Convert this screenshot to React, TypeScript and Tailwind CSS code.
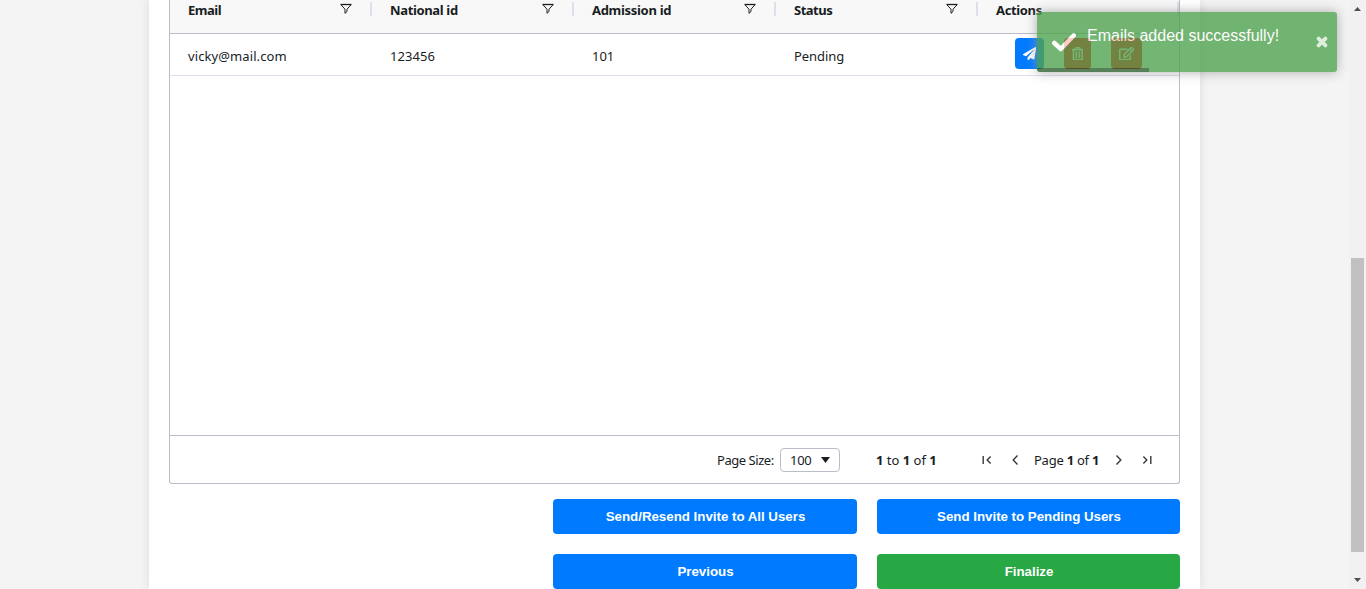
import type { ReactNode } from "react";
import { FaPaperPlane, FaRegEdit, FaRegTrashAlt } from "react-icons/fa";

const headers = [
  { label: "Email", spacing: "tracking-[-0.5px]" },
  { label: "National id", spacing: "tracking-[-0.35px]" },
  { label: "Admission id", spacing: "tracking-[-0.3px]" },
  { label: "Status", spacing: "tracking-[-0.5px]" },
];
const row = [
  { value: "vicky@mail.com", spacing: "tracking-[0.1px]" },
  { value: "123456", spacing: "tracking-[0.05px]" },
  { value: "101", spacing: "tracking-[0px]" },
  { value: "Pending", spacing: "tracking-[-0.05px]" },
];

function FilterIcon() {
  return (
    <svg className="mt-0.5 h-3 w-3 shrink-0" viewBox="0 0 12 12" fill="none" stroke="#181d1f" strokeWidth="1">
      <path d="M0.5 1.5H11.5" strokeWidth="1.3" />
      <path d="M1.2 2L5 6.2V10.3L7 8.5V6.2L10.8 2" />
    </svg>
  );
}

function Chevron({ flip, bar }: { flip?: boolean; bar?: boolean }) {
  return (
    <svg
      className={flip ? "h-3 w-3 shrink-0 -scale-x-100" : "h-3 w-3 shrink-0"}
      viewBox="0 0 12 12"
      fill="none"
      stroke="#34393b"
      strokeWidth="1.4"
    >
      {bar ? <path d="M2.2 2V10M9.6 2.6L6.2 6L9.6 9.4" /> : <path d="M8.5 1.5L4.2 6L8.5 10.5" />}
    </svg>
  );
}

function GridHeader() {
  return (
    <div className="flex h-[34px] shrink-0 border-b border-[#babcc9] bg-[#f8f8f8] pt-px text-[13px] font-bold">
      {headers.map((h) => (
        <div key={h.label} className="flex w-[202px] shrink-0 pl-[18px]">
          <span className={`w-[152px] shrink-0 leading-[18px] ${h.spacing}`}>{h.label}</span>
          <FilterIcon />
          <span className="ml-[18px] mt-px h-3.5 w-0.5 shrink-0 bg-[#dddfeb]" />
        </div>
      ))}
      <div className="flex flex-1 justify-between overflow-hidden pl-[18px]">
        <span className="leading-[18px] tracking-[-0.35px]">Actions</span>
        <span className="mt-px h-3.5 w-0.5 bg-[#dddfeb]" />
      </div>
    </div>
  );
}

function IconButton({ tone, children }: { tone: string; children: ReactNode }) {
  return (
    <button className={`flex h-[31px] shrink-0 items-center justify-center rounded text-[13.33px] text-white ${tone}`}>
      {children}
    </button>
  );
}

function GridRow() {
  return (
    <div className="flex h-[42px] shrink-0 items-start border-b border-[#dddfeb] text-[13px]">
      {row.map((c) => (
        <div key={c.value} className={`w-[202px] shrink-0 pl-[18px] pt-[13px] leading-[18px] ${c.spacing}`}>
          {c.value}
        </div>
      ))}
      <div className="flex flex-1 gap-5 pl-[37px] pt-1">
        <IconButton tone="w-[29px] bg-[#007bff]"><FaPaperPlane /></IconButton>
        <IconButton tone="w-[27px] bg-[#ff0000]"><FaRegTrashAlt className="w-[11.67px]" strokeWidth="16" stroke="currentColor" /></IconButton>
        <IconButton tone="w-[31px] bg-[#ff0000]"><FaRegEdit className="w-[15px]" strokeWidth="16" stroke="currentColor" /></IconButton>
      </div>
    </div>
  );
}

function Pager() {
  return (
    <div className="flex h-12 shrink-0 items-center border-t border-[#babcc9] pl-[547px] pt-px text-[13px]">
      <span className="w-[57px] whitespace-nowrap pt-px tracking-[-0.45px]">Page Size:</span>
      <div className="-mt-px ml-1.5 flex h-6 w-[60px] items-center justify-between rounded border border-[#babcc9] px-[9px]">
        <span className="pt-0.5 tracking-[-0.3px]">100</span>
        <svg className="h-1.5 w-[9px]" viewBox="0 0 9 6"><path d="M0 0H9L4.5 6Z" fill="#181d1f" /></svg>
      </div>
      <span className="ml-9 w-[60px] whitespace-nowrap pt-px"><b>1</b> to <b>1</b> of <b>1</b></span>
      <div className="ml-[45px] flex items-center">
        <Chevron bar />
        <span className="ml-4 flex"><Chevron /></span>
        <span className="ml-[13px] w-[66px] whitespace-nowrap pt-px tracking-[-0.25px]">Page <b>1</b> of <b>1</b></span>
        <span className="ml-[13px] flex"><Chevron flip /></span>
        <span className="ml-4 flex"><Chevron flip bar /></span>
      </div>
    </div>
  );
}

function WideButton({ tone, children }: { tone: string; children: ReactNode }) {
  return (
    <button className={`h-[35px] rounded pl-px font-['Liberation_Sans',sans-serif] text-[13.33px] font-bold tracking-[-0.02px] text-white ${tone}`}>
      {children}
    </button>
  );
}

function Toast() {
  return (
    <div className="absolute left-[1037px] top-3 flex h-[60px] w-[300px] overflow-hidden rounded-[3px] bg-[#51a351] font-['Liberation_Sans',sans-serif] text-white opacity-80 shadow-[0_0_12px_#999999]">
      <svg className="ml-[15px] mt-5 h-5 w-6 shrink-0" viewBox="0 0 24 20">
        <path d="M2.3 11L8.8 17L21.7 3.5" fill="none" stroke="#fff" strokeWidth="4.5" strokeLinecap="round" strokeLinejoin="round" />
      </svg>
      <span className="ml-[11px] mt-3.5 whitespace-nowrap text-base leading-5">Emails added successfully!</span>
      <svg className="ml-auto mr-[9px] mt-6 h-3 w-3 shrink-0" viewBox="0 0 12 12">
        <path d="M2.6 2.6L9.4 9.4M9.4 2.6L2.6 9.4" stroke="#fff" strokeOpacity="0.8" strokeWidth="3.8" strokeLinecap="round" />
      </svg>
      <span className="absolute bottom-0 left-0 h-1 w-28 bg-black opacity-40" />
    </div>
  );
}

function Scrollbar() {
  return (
    <div className="flex w-[17px] shrink-0 flex-col items-center bg-[#f1f1f1]">
      <svg className="mt-[7px] h-1 w-[7px]" viewBox="0 0 7 4"><path d="M3.5 0L7 4H0Z" fill="#505050" /></svg>
      <div className="mt-[247px] h-[294px] w-[13px] bg-[#c1c1c1]" />
      <svg className="mt-[26px] h-1 w-[7px]" viewBox="0 0 7 4"><path d="M0 0H7L3.5 4Z" fill="#505050" /></svg>
    </div>
  );
}

export default function App() {
  return (
    <div className="relative flex h-[589px] w-[1366px] overflow-hidden bg-[#f4f4f4] font-['Noto_Sans',sans-serif] text-[#181d1f]">
      <div className="flex flex-1 justify-center overflow-hidden">
        <main className="flex w-[1051px] shrink-0 flex-col bg-white px-5 shadow-[0_0_10px_rgba(0,0,0,0.1)]">
          <section className="flex h-[484px] shrink-0 flex-col rounded-b-[3px] border-x border-b border-[#babcc9]">
            <GridHeader />
            <GridRow />
            <div className="flex-1" />
            <Pager />
          </section>
          <div className="mt-[15px] grid grid-cols-[304px_303px] justify-end gap-5">
            <WideButton tone="bg-[#007bff]">Send/Resend Invite to All Users</WideButton>
            <WideButton tone="bg-[#007bff]">Send Invite to Pending Users</WideButton>
            <WideButton tone="bg-[#007bff]">Previous</WideButton>
            <WideButton tone="bg-[#28a745]">Finalize</WideButton>
          </div>
        </main>
      </div>
      <Scrollbar />
      <Toast />
    </div>
  );
}
